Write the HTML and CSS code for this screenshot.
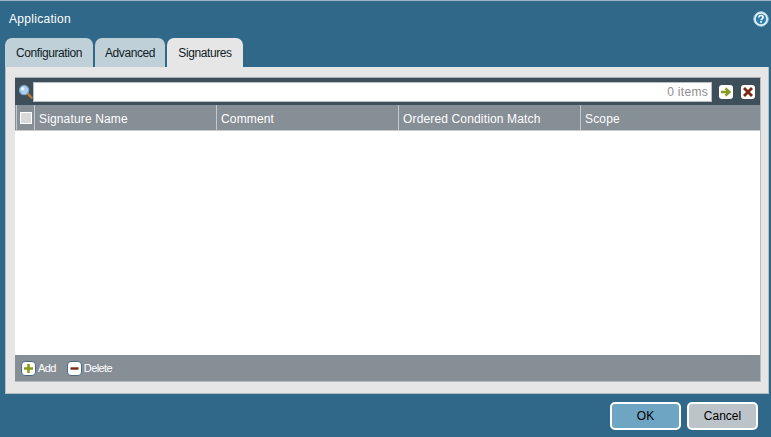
FILE: index.html
```html
<!DOCTYPE html>
<html lang="en">
<head>
<meta charset="utf-8">
<title>Application</title>
<link rel="stylesheet" href="styles.css">
</head>
<body>
<div class="dialog">
  <header class="titlebar">
    <span class="title">Application</span>
    <svg class="help" width="16" height="16" viewBox="0 0 16 16"><circle cx="8" cy="8" r="7.2" fill="#e6f1f7" stroke="#a9cfe6" stroke-width="1"/><circle cx="8" cy="8" r="5.2" fill="#2f7fb0"/><path d="M5.9 6.5c0-1.3 1-2 2.1-2s2.1.7 2.1 1.8c0 1.5-2 1.5-2 2.9" fill="none" stroke="#fff" stroke-width="1.6"/><rect x="7.2" y="10.1" width="1.7" height="1.7" fill="#fff"/></svg>
  </header>
  <nav class="tabs">
    <div class="tab tab-a">Configuration</div>
    <div class="tab tab-b">Advanced</div>
    <div class="tab tab-active">Signatures</div>
  </nav>
  <section class="panel">
    <div class="grid">
      <div class="toolbar">
        <svg class="search-icon" width="15" height="15" viewBox="0 0 16 16"><path d="M10.5 10.5l4 4" stroke="#c07a30" stroke-width="2.4" stroke-linecap="round"/><circle cx="6.5" cy="6.5" r="5" fill="#a9d0f2" stroke="#7fa3c4" stroke-width="1.2"/><circle cx="5" cy="5" r="1.8" fill="#e8f4fd"/></svg>
        <div class="search"><span class="count">0 items</span></div>
        <span class="tool-btn"><svg width="14" height="14" viewBox="0 0 14 14"><path d="M2 7h7.5M6.5 3.5L10.5 7l-4 3.5" fill="none" stroke="#8a9a1e" stroke-width="2.4"/></svg></span>
        <span class="tool-btn"><svg width="14" height="14" viewBox="0 0 14 14"><path d="M3 3l8 8M11 3l-8 8" stroke="#7a2a12" stroke-width="2.8"/></svg></span>
      </div>
      <div class="thead">
        <div class="th th-check"><span class="checkbox"></span></div>
        <div class="th th-name">Signature Name</div>
        <div class="th th-comment">Comment</div>
        <div class="th th-match">Ordered Condition Match</div>
        <div class="th th-scope">Scope</div>
      </div>
      <div class="tbody"></div>
      <div class="tfoot">
        <span class="action"><span class="round-btn"><svg width="11" height="11" viewBox="0 0 11 11"><path d="M5.5 1v9M1 5.5h9" stroke="#8a9a1e" stroke-width="2.6"/></svg></span><span class="action-label">Add</span></span>
        <span class="action"><span class="round-btn"><svg width="11" height="11" viewBox="0 0 11 11"><path d="M1.5 5.5h8" stroke="#7a2a12" stroke-width="2.4"/></svg></span><span class="action-label">Delete</span></span>
      </div>
    </div>
  </section>
  <footer class="buttons">
    <button class="btn btn-ok" type="button">OK</button>
    <button class="btn btn-cancel" type="button">Cancel</button>
  </footer>
</div>
</body>
</html>
```
FILE: styles.css
```css
* { box-sizing: border-box; }
html, body { margin: 0; padding: 0; }
body { width: 771px; height: 437px; overflow: hidden; background: #2f6889; font-family: "Liberation Sans", Arial, sans-serif; }
.dialog { width: 771px; height: 437px; display: flex; flex-direction: column; border-top: 1px solid #9fb4c2; }
.titlebar { height: 37px; display: flex; align-items: center; justify-content: space-between; padding: 0 2px 2px 9px; }
.title { color: #fff; font-size: 12px; letter-spacing: 0.3px; }
.help { display: block; }
.tabs { height: 29px; display: flex; gap: 2px; padding-left: 5px; }
.tab { height: 29px; border-radius: 7px 7px 0 0; display: flex; align-items: center; justify-content: center; font-size: 12px; letter-spacing: -0.4px; color: #101c24; background: #bfd0d8; }
.tab-a { width: 88px; }
.tab-b { width: 70px; }
.tab-active { width: 76px; background: #e6e6e6; }
.panel { margin: 0 2px 0 5px; height: 327px; background: #e6e6e6; border: 1px solid #b4bfc6; border-top: 0; padding: 10px 7px 0 9px; }
.grid { height: 305px; display: flex; flex-direction: column; border-right: 1px solid #b4bcc2; border-bottom: 1px solid #b4bcc2; background: #fff; }
.toolbar { height: 28px; background: #3f4f5a; display: flex; align-items: center; padding: 0 5px 0 3px; border-top: 1px solid #a9b2b8; }
.search-icon { flex: none; }
.search { flex: 1; height: 20px; background: #fff; border: 1px solid #b9c0c5; display: flex; align-items: center; justify-content: flex-end; padding-right: 3px; margin-right: 7px; }
.count { font-size: 12px; letter-spacing: 0.3px; color: #8e8e8e; }
.tool-btn { width: 14px; height: 14px; background: #fff; border-radius: 3px; display: flex; }
.tool-btn + .tool-btn { margin-left: 8px; }
.thead { height: 26px; background: #868e96; display: flex; border-bottom: 1px solid #c5cace; }
.th { color: #fff; font-size: 12px; letter-spacing: 0.15px; display: flex; align-items: center; padding: 2px 0 0 4px; border-right: 1px solid #c3c8cc; }
.th-check { width: 19px; padding: 0 0 0 3px; border-left: 1px solid #c3c8cc; margin-left: 1px; }
.th-name { width: 182px; }
.th-comment { width: 182px; }
.th-match { width: 182px; }
.th-scope { flex: 1; border-right: 0; }
.checkbox { width: 12px; height: 12px; background: #d9d9d9; border: 1px solid #fff; display: block; }
.tbody { flex: 1; background: #fff; }
.tfoot { height: 26px; background: #868e96; display: flex; align-items: center; padding-left: 6px; gap: 11px; }
.action { display: flex; align-items: center; gap: 2px; color: #fff; font-size: 11px; letter-spacing: -0.6px; }
.round-btn { width: 15px; height: 15px; background: #fff; border-radius: 4px; display: flex; align-items: center; justify-content: center; border: 1px solid #4d6b80; }
.buttons { flex: 1; display: flex; justify-content: flex-end; align-items: center; gap: 6px; padding: 1px 13px 0 0; }
.btn { width: 71px; height: 28px; border: 2px solid #fff; border-radius: 5px; font-family: inherit; font-size: 12px; color: #000; padding: 0; }
.btn-ok { background: #6ea5c2; }
.btn-cancel { background: #bcc4ca; }
```
